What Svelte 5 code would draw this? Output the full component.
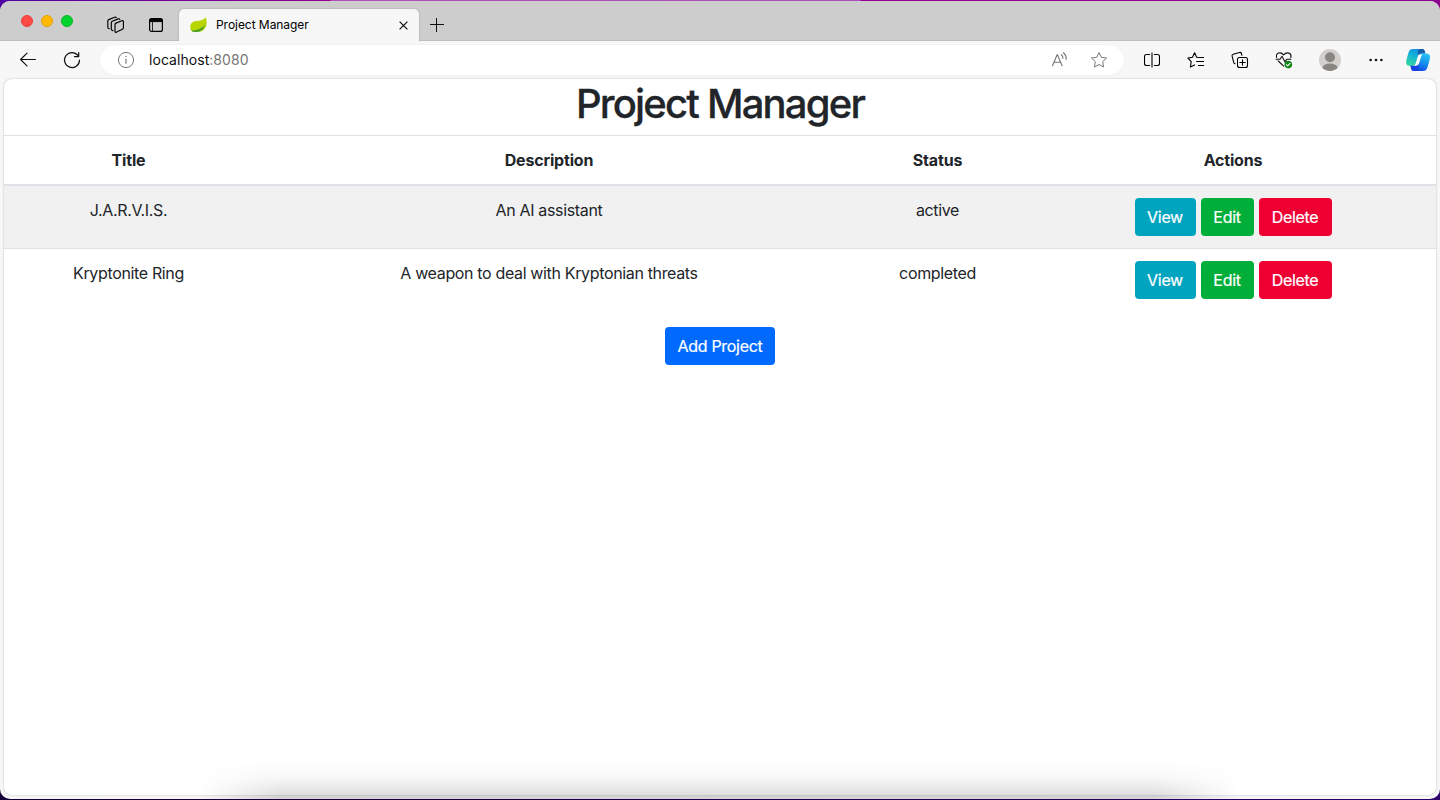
<script>
  const projects = [
    { title: 'J.A.R.V.I.S.', description: 'An AI assistant', status: 'active' },
    { title: 'Kryptonite Ring', description: 'A weapon to deal with Kryptonian threats', status: 'completed' }
  ];
</script>

<div class="desktop">
  <div class="window">
    <header class="tabstrip">
      <div class="lights"><i class="red"></i><i class="yellow"></i><i class="green"></i></div>
      <svg class="workspaces" width="18" height="18" viewBox="0 0 18 18" fill="none" stroke="#000" stroke-width="1.15" stroke-linejoin="round" stroke-linecap="round">
        <path d="M8 8.7q0-1.2 1-1.6l5.8-2.3q1.6-.5 1.6.9v6.1q0 1-.9 1.4l-5.9 2.9Q8 16.8 8 15.4Z" />
        <path d="M5.9 14.6q-1.6-.2-1.6-1.5V6.9q0-1.2 1-1.6l5.9-2.4q1.2-.4 1.6.5" />
        <path d="M2.3 12.7q-1.5-.2-1.5-1.5V5.1q0-1.1 1-1.5L7.6 1.2q1-.4 1.6.4" />
      </svg>
      <svg class="tabactions" width="14" height="14" viewBox="0 0 14 14" fill="none" stroke="#000">
        <rect x=".6" y=".6" width="12.8" height="12.8" rx="2" stroke-width="1.2" />
        <path d="M1 1.3h12v2.3H1z" fill="#000" /><path d="M3.5 4v9" stroke-width=".8" />
      </svg>
      <div class="tab">
        <svg width="17" height="16" viewBox="0 0 17 16">
          <path d="M15.8.3C17.2 5 17 10.2 13.5 13 10 15.7 4.7 15.2 1.6 14 -.1 12.2-.4 8.2 1.6 6 5 2.7 12.3 5.3 15.8.3Z" fill="#b9d500" />
          <path d="M2 13.2C9 13 13 10 15.9 5.2 16 9.2 14.2 12.6 11.2 14 8 15.4 4.4 15.1 2 14.2Z" fill="#a0cc10" />
          <path d="M1.6 13.6C7 13.6 11 11.8 14.6 8.4 12.9 14.8 6 16 1.6 14Z" fill="#4d9f2d" />
        </svg>
        <span>Project Manager</span>
        <svg class="close" width="9" height="9" viewBox="0 0 9 9" stroke="#111" stroke-width="1.2"><path d="m.6.6 7.8 7.8M8.4.6.6 8.4" /></svg>
      </div>
      <svg class="plus" width="14" height="14" viewBox="0 0 14 14" stroke="#111"><path d="M6.5 0v14M0 6.5h14" /></svg>
    </header>

    <div class="toolbar">
      <svg class="back" width="18" height="16" viewBox="0 0 18 16" fill="none" stroke="#111" stroke-width="1.15" stroke-linecap="round" stroke-linejoin="round"><path d="M16.4 7.5H1.6M8 1.2 1.6 7.5l6.4 6.3" /></svg>
      <svg class="reload" width="18" height="18" viewBox="0 0 18 18" fill="none" stroke="#111" stroke-width="1.2" stroke-linecap="round" stroke-linejoin="round"><path d="M16.5 9.2A7.5 7.5 0 1 1 14.9 4.4M15.7 1.5v4.1h-4.2" /></svg>
      <div class="address">
        <svg class="info" width="18" height="18" viewBox="0 0 18 18" fill="none" stroke="#767676"><circle cx="9" cy="9" r="7.6" /><path d="M9 7.8v5" stroke-width="1.2" /><circle cx="9" cy="5.4" r=".4" fill="#767676" stroke-width=".7" /></svg>
        <span class="url">localhost<em>:8080</em></span>
        <svg class="read" width="18" height="18" viewBox="0 0 18 18" fill="none" stroke="#777" stroke-width="1.15" stroke-linecap="round"><path d="m1.5 14.7 4.6-11h.4l4.6 11M3.2 11.2h6.2" /><path d="M10.4 3.7q1.6 1.2 1.4 3.6M12.4 1.8q3 2.4 2.8 6.4" /></svg>
        <svg class="star" width="18" height="18" viewBox="0 0 18 18" fill="none" stroke="#777" stroke-linejoin="round"><path d="m9 1.5 2.3 4.8 5.2.7-3.8 3.7.9 5.3L9 13.5 4.4 16l.9-5.3L1.5 7l5.2-.7Z" /></svg>
      </div>
      <div class="tools">
        <svg class="split" width="16" height="16" viewBox="0 0 16 16" fill="none" stroke="#000"><path d="M6 2.5H2.5q-2 0-2 2v7q0 2 2 2H6M10 2.5h3.5q2 0 2 2v7q0 2-2 2H10M8 .5v15" stroke-width="1.1" /></svg>
        <svg class="favs" width="18" height="18" viewBox="0 0 18 18" fill="none" stroke="#000" stroke-width="1.1" stroke-linejoin="round" stroke-linecap="round"><path d="M10.3 6.4H9.7L7.6 1.7 5.5 6.3.9 7.1l3.3 3.5-.8 5.4 4.1-2.1M11.4 6.5h5.2M9.6 10.5h7M11.4 14.5h5.2" /></svg>
        <svg class="collections" width="18" height="18" viewBox="0 0 18 18" fill="none" stroke="#000" stroke-width="1.1" stroke-linecap="round"><rect x="6.5" y="6.5" width="10" height="10" rx="2" /><path d="M11.5 8.8v5.4M8.8 11.5h5.4M4.1 12.8Q3 12.4 2.7 11.3L1.1 5.1q-.4-1.5 1.1-1.9l6.3-1.7q1.4-.4 1.9 1l.5 1.8" /></svg>
        <svg class="health" width="18" height="18" viewBox="0 0 18 18" fill="none" stroke="#111" stroke-width="1.1" stroke-linejoin="round" stroke-linecap="round"><path d="M1.6 6.4C.6 1.9 5.6.3 8.7 3.8 11.8.3 17 1.9 15.8 6.6M3.3 10l5.3 5.2M1 8.3h4l2-3.1 3 5.7 1.7-2.6h4.2" /><circle cx="13.3" cy="13.6" r="3.8" fill="#108515" stroke="none" /><path d="m11.5 13.6 1.2 1.2 2.4-2.4" stroke="#fff" /></svg>
        <svg class="avatar" width="22" height="22" viewBox="0 0 22 22"><circle cx="11" cy="11" r="11" fill="#d2cfcc" /><circle cx="11" cy="8.2" r="5" fill="#898581" /><path d="M3.3 18.8C4.6 15.7 7.2 14.5 11 14.5s6.4 1.2 7.7 4.3A11 11 0 0 1 3.3 18.8Z" fill="#898581" /></svg>
        <svg class="more" width="14" height="4" viewBox="0 0 14 4" fill="#111"><circle cx="1.6" cy="2" r="1.3" /><circle cx="7" cy="2" r="1.3" /><circle cx="12.4" cy="2" r="1.3" /></svg>
        <svg class="copilot" width="24" height="22" viewBox="0 0 24 22">
          <defs>
            <linearGradient id="teal" x1=".6" y1="0" x2=".2" y2="1"><stop stop-color="#0d91e6" /><stop offset=".5" stop-color="#19b9d1" /><stop offset="1" stop-color="#34d99a" /></linearGradient>
            <linearGradient id="azure" x1=".7" y1="0" x2=".3" y2="1"><stop stop-color="#26c2f4" /><stop offset=".5" stop-color="#168bed" /><stop offset="1" stop-color="#153fe6" /></linearGradient>
          </defs>
          <path d="M6.8 0h9.7q1.6 0 2 1.5l.9 3.1h-4q-2 0-2.6 2L10 15.5q-.4 1.3-2 1.3H3.5Q.1 16.8.1 13.4q0-1.6 1-5L2.6 3.3Q3.6 0 6.8 0Z" fill="url(#teal)" />
          <path d="M13 0h3.5q1.6 0 2 1.5l.9 3.1h-4q-1.9 0-2.6 2L12.2 8Q11 3 13 0Z" fill="#155da8" />
          <path d="M17 22H7.6q-1.7 0-2.2-1.7l-1-3.5H8q1.8 0 2.3-1.7l2.5-8.5q.6-2 2.6-2h4.7q4 0 3.9 3.6 0 1.8-1 5l-1.6 5.3Q20.4 22 17 22Z" fill="url(#azure)" />
          <path d="M11 22H7.6q-1.7 0-2.2-1.7l-1-3.5H8q1.8 0 2.3-1.7l1-3.1Q13.6 18 11 22Z" fill="#1742df" />
          <path d="M13.2 5.6h3.5q-1.1.6-1.6 2.2l-2 6.5q-.7 2.4-2.8 2.4H7.4q1.6-.2 2.1-1.9l2.3-7.4q.4-1.6 1.4-1.8Z" fill="#fff" />
        </svg>
      </div>
    </div>

    <main>
      <h1>Project Manager</h1>
      <table>
        <colgroup><col class="c1" /><col class="c2" /><col class="c3" /><col /></colgroup>
        <thead><tr><th>Title</th><th>Description</th><th>Status</th><th>Actions</th></tr></thead>
        <tbody>
          {#each projects as project}
            <tr>
              <td>{project.title}</td>
              <td>{project.description}</td>
              <td>{project.status}</td>
              <td><div class="actions"><button class="view">View</button><button class="edit">Edit</button><button class="delete">Delete</button></div></td>
            </tr>
          {/each}
        </tbody>
      </table>
      <button class="add">Add Project</button>
      <div class="shade"></div>
    </main>
  </div>
</div>

<style>
  :global(body) { margin: 0; overflow: hidden; }
  * { box-sizing: border-box; }
  svg { display: block; flex: none; }
  .desktop {
    width: 1440px; height: 800px; padding: 1px 0;
    background: linear-gradient(90deg, #4f00a0, #93008f 330px, #b44dbe 331px, #b04bbc 860px, #980091 861px, #8c008e) top / 100% 12px no-repeat, linear-gradient(90deg, #130036, #2b006c);
    font-family: Inter, "Liberation Sans", sans-serif;
  }
  .window { height: 798px; border-radius: 10px; overflow: hidden; background: #f7f7f7; display: flex; flex-direction: column; }
  .tabstrip { height: 40px; flex: none; background: #cdcdcd; display: flex; align-items: center; box-shadow: inset 0 -1px 1px #bdbdbd; }
  .lights { display: flex; gap: 8px; margin-left: 21px; }
  .lights i { width: 12px; height: 12px; border-radius: 50%; border: 1px solid; }
  .red { background: #ff4a45; border-color: #e93d38 !important; }
  .yellow { background: #ffb900; border-color: #e5a300 !important; }
  .green { background: #00d22d; border-color: #00b825 !important; }
  .workspaces { margin: 7px 0 0 34px; }
  .tabactions { margin: 8px 0 0 24px; }
  .tab { align-self: flex-end; height: 32px; width: 240px; margin-left: 16px; padding: 0 11px; display: flex; align-items: center; background: #f7f7f7; border-radius: 5px 5px 0 0; box-shadow: 0 0 2px #999; font-size: 12px; line-height: 16px; color: #000; letter-spacing: -.05px; }
  .tab span { margin-left: 9px; }
  .close { margin: 1px 0 0 auto; }
  .plus { margin: 7px 0 0 11px; }
  .toolbar { height: 37px; flex: none; display: flex; align-items: center; background: #f7f7f7; }
  .back { margin-left: 19px; }
  .reload { margin-left: 26px; }
  .address { width: 1024px; height: 30px; margin-left: 19px; background: #fff; border-radius: 15px; display: flex; align-items: center; box-shadow: 0 0 3px #ececec; }
  .info { margin-left: 17px; }
  .url { margin-left: 14px; font-size: 14px; line-height: 18px; color: #111; letter-spacing: .05px; }
  .url em { font-style: normal; color: #767676; }
  .read { margin-left: auto; }
  .star { margin: 0 16px 0 21px; }
  .tools { display: flex; align-items: center; }
  .split { margin-left: 20px; }
  .favs { margin-left: 27px; }
  .collections { margin-left: 26px; }
  .health { margin-left: 26px; }
  .avatar { margin-left: 26px; }
  .more { margin-left: 28px; }
  .copilot { margin-left: 23px; }
  main { position: relative; width: 1432px; height: 716px; flex: none; margin: 1px 4px 0; background: #fff; border-radius: 8px; box-shadow: 0 0 2px #b4b4b4; text-align: center; color: #212529; font-size: 16px; line-height: 24px; letter-spacing: -.35px; }
  h1 { margin: 0; padding-top: 1px; height: 56px; font-size: 40px; line-height: 48px; font-weight: 500; letter-spacing: -1.8px; -webkit-text-stroke: .3px #212529; }
  table { width: 100%; table-layout: fixed; border-spacing: 0; }
  .c1 { width: 249px; }
  .c2 { width: 592px; }
  .c3 { width: 185px; }
  th, td { padding: 12px; border-top: 1px solid #dee2e6; vertical-align: top; }
  th { font-weight: 700; border-bottom: 2px solid #dee2e6; letter-spacing: -.18px; }
  tbody tr:first-child td { border-top: 0; background: #f1f1f1; }
  .actions { display: flex; justify-content: center; gap: 5px; }
  button { height: 38px; padding: 0; border: 0; border-radius: 4px; color: #fff; font: inherit; letter-spacing: -.3px; -webkit-text-stroke: .2px #fff; }
  .view { width: 61px; background: #00a4bf; }
  .edit { width: 53px; background: #00ae3a; }
  .delete { width: 73px; background: #ee0033; }
  .add { width: 110px; margin-top: 16px; background: #006aff; }
  .shade { position: absolute; left: 196px; bottom: -4px; width: 1040px; height: 38px; pointer-events: none; background: linear-gradient(transparent, rgba(0, 0, 0, .03) 45%, rgba(0, 0, 0, .15)); mask-image: linear-gradient(90deg, transparent, #000 80px, #000 955px, transparent); }
</style>
